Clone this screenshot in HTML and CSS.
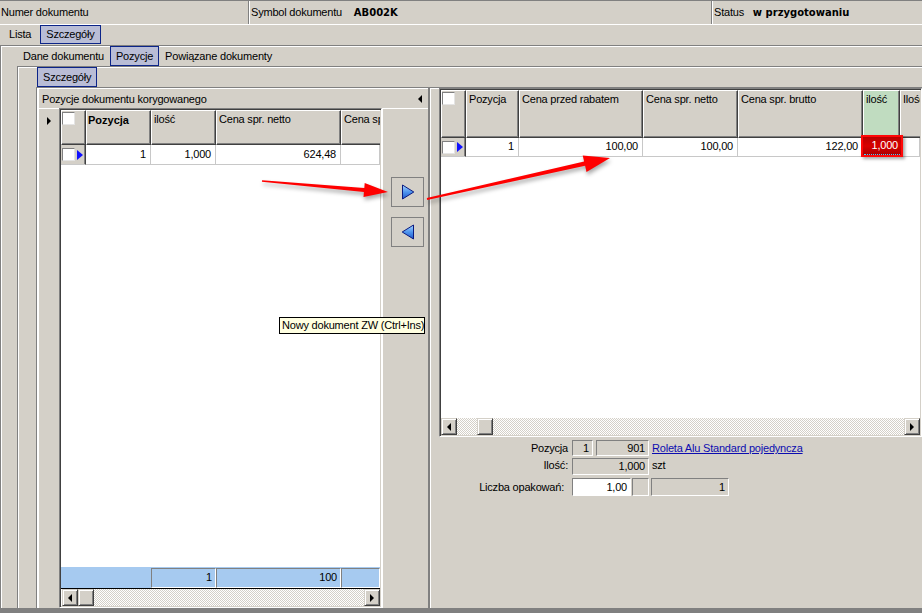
FILE: index.html
```
<!DOCTYPE html>
<html lang="pl">
<head>
<meta charset="utf-8">
<title>Pozycje dokumentu</title>
<link rel="stylesheet" href="styles.css">
</head>
<body>
<div class="app">
  <div class="infobar">
    <div class="info c1">Numer dokumentu</div>
    <div class="info c2">Symbol dokumentu <b>AB002K</b></div>
    <div class="info c3">Status <b>w przygotowaniu</b></div>
  </div>
  <div class="tabrow t1"><span class="tab">Lista</span><span class="tab on">Szczegóły</span></div>
  <div class="panel p1">
    <div class="tabrow t2"><span class="tab">Dane dokumentu</span><span class="tab on">Pozycje</span><span class="tab">Powiązane dokumenty</span></div>
    <div class="panel p2">
      <div class="tabrow t3"><span class="tab on">Szczegóły</span></div>
      <div class="panel p3">
        <section class="left">
          <div class="lhead"><span>Pozycje dokumentu korygowanego</span><i class="tri tl"></i></div>
          <div class="lbody">
            <div class="indcol"><i class="tri tr"></i></div>
            <div class="grid lgrid">
              <div class="gh">
                <div class="hc chk"><span class="cb"></span></div>
                <div class="hc bold">Pozycja</div>
                <div class="hc">ilość</div>
                <div class="hc">Cena spr. netto</div>
                <div class="hc last">Cena spr. brutto</div>
              </div>
              <div class="gr">
                <div class="dc ind"><span class="cb"></span><i class="ptr"></i></div>
                <div class="dc">1</div>
                <div class="dc">1,000</div>
                <div class="dc">624,48</div>
                <div class="dc"></div>
              </div>
              <div class="gbody"></div>
              <div class="gf">
                <div class="blank"></div>
                <div class="fc">1</div>
                <div class="fc">100</div>
                <div class="fc"></div>
              </div>
              <div class="sb lsb">
                <span class="sbtn"><i class="tri sl"></i></span>
                <span class="sbtn"></span>
                <span class="track"></span>
                <span class="sbtn"><i class="tri sr"></i></span>
              </div>
            </div>
            <div class="btncol">
              <button class="navbtn" type="button">
                <svg width="14" height="16" viewBox="0 0 14 16">
                  <defs>
                    <linearGradient id="gr1" x1="0" y1="0" x2="0" y2="1">
                      <stop offset="0" stop-color="#a9d6ff"/>
                      <stop offset="0.5" stop-color="#4f95ee"/>
                      <stop offset="1" stop-color="#1f58cc"/>
                    </linearGradient>
                  </defs>
                  <path d="M1.5 1 L12.8 8 L1.5 15 Z" fill="url(#gr1)" stroke="#0a1a80" stroke-width="1" stroke-linejoin="round"/>
                </svg>
              </button>
              <button class="navbtn" type="button">
                <svg width="14" height="16" viewBox="0 0 14 16">
                  <defs>
                    <linearGradient id="gr2" x1="0" y1="0" x2="0" y2="1">
                      <stop offset="0" stop-color="#a9d6ff"/>
                      <stop offset="0.5" stop-color="#4f95ee"/>
                      <stop offset="1" stop-color="#1f58cc"/>
                    </linearGradient>
                  </defs>
                  <path d="M12.5 1 L1.2 8 L12.5 15 Z" fill="url(#gr2)" stroke="#0a1a80" stroke-width="1" stroke-linejoin="round"/>
                </svg>
              </button>
            </div>
          </div>
        </section>
        <div class="splitter"></div>
        <section class="right">
          <div class="grid rgrid">
            <div class="gh">
              <div class="hc chk"><span class="cb"></span></div>
              <div class="hc">Pozycja</div>
              <div class="hc">Cena przed rabatem</div>
              <div class="hc">Cena spr. netto</div>
              <div class="hc">Cena spr. brutto</div>
              <div class="hc green">ilość</div>
              <div class="hc last">Ilość</div>
            </div>
            <div class="gr">
              <div class="dc ind"><span class="cb"></span><i class="ptr"></i></div>
              <div class="dc">1</div>
              <div class="dc">100,00</div>
              <div class="dc">100,00</div>
              <div class="dc">122,00</div>
              <div class="dc sel"><span class="editor">1,000</span></div>
              <div class="dc"></div>
            </div>
            <div class="gbody"></div>
            <div class="sb rsb">
              <span class="sbtn"><i class="tri sl"></i></span>
              <span class="track gap"></span>
              <span class="sbtn"></span>
              <span class="track"></span>
              <span class="sbtn"><i class="tri sr"></i></span>
            </div>
          </div>
          <div class="form">
            <div class="frow r1">
              <span class="flabel">Pozycja</span>
              <span class="fld w21">1</span>
              <span class="fld w53">901</span>
              <a class="flink" href="#">Roleta Alu Standard pojedyncza</a>
            </div>
            <div class="frow r2">
              <span class="flabel">Ilość:</span>
              <span class="fld w77">1,000</span>
              <span class="unit">szt</span>
            </div>
            <div class="frow r3">
              <span class="flabel pr">Liczba opakowań:</span>
              <span class="fld white w59">1,00</span>
              <span class="fld w17"></span>
              <span class="fld w78">1</span>
            </div>
          </div>
        </section>
      </div>
    </div>
  </div>
  <div class="bottom"></div>

  <div class="tip">Nowy dokument ZW (Ctrl+Ins)</div>

  <svg class="arrows" width="922" height="613" viewBox="0 0 922 613">
    <polygon points="261.9,181.8 363.9,191.9 363.5,196.9 388,192 364.7,182.9 364.3,187.9 262.1,180.2" fill="#ff0000"/>
    <polygon points="427.2,200.0 585.1,165.8 586.5,172.0 610,158 582.7,155.4 584.1,161.6 426.8,198.0" fill="#ff0000"/>
  </svg>
</div>
</body>
</html>
```

FILE: styles.css
```
* { box-sizing: border-box; margin: 0; padding: 0; }
html, body { margin: 0; background: #d4d0c8; }
body {
  font-family: "Liberation Sans", Arial, sans-serif;
  font-size: 11px;
  letter-spacing: -0.2px;
  color: #000;
}
.app {
  position: relative;
  width: 922px;
  height: 613px;
  display: flex;
  flex-direction: column;
  background: #d4d0c8;
  overflow: hidden;
}

/* top info bar */
.infobar {
  flex: none;
  display: flex;
  height: 25px;
  border-top: 1px solid #808080;
  border-bottom: 1px solid #fff;
}
.info { line-height: 23px; white-space: nowrap; padding-left: 1px; }
.c1 { width: 249px; border-right: 1px solid #808080; }
.c2 { width: 463px; border-left: 1px solid #fff; border-right: 1px solid #808080; }
.c3 { flex: 1; border-left: 1px solid #fff; padding-left: 1px; }
.info b {
  font-family: "DejaVu Sans", Verdana, sans-serif;
  font-size: 10px;
  font-weight: bold;
  letter-spacing: 0;
  margin-left: 9px;
}
.c3 b { margin-left: 6px; }

/* tabs */
.tabrow { flex: none; display: flex; align-items: flex-start; height: 20px; }
.tab {
  height: 20px;
  line-height: 18px;
  padding: 0 5px;
  border: 1px solid transparent;
  white-space: nowrap;
}
.tab.on { background: #b9bdd6; border-color: #0c2488; }
.t1 { padding-left: 3px; }
.t1 .tab { height: 19px; line-height: 17px; }
.t1 .tab + .tab { margin-left: 3px; }
.t2 { padding-left: 16px; }
.t3 { padding-left: 19px; }

/* nested panels */
.panel {
  flex: 1;
  min-height: 0;
  display: flex;
  flex-direction: column;
  border-top: 1px solid #808080;
  border-left: 1px solid #808080;
  box-shadow: inset 1px 1px 0 #fff;
}
.p2 { margin-left: 16px; }
.p3 { margin-left: 18px; flex-direction: row; padding-left: 1px; }

/* left section */
.left { flex: none; width: 390px; display: flex; flex-direction: column; }
.lhead {
  flex: none;
  height: 20px;
  display: flex;
  align-items: center;
  justify-content: space-between;
  padding: 0 6px 0 3px;
  border-top: 1px solid #fff;
  border-left: 1px solid #fff;
  white-space: nowrap;
}
.lbody { flex: 1; min-height: 0; display: flex; }
.indcol {
  flex: none;
  width: 21px;
  border-top: 1px solid #fff;
  border-left: 1px solid #fff;
  position: relative;
}
.indcol .tr { position: absolute; left: 8px; top: 8px; }

.tri { display: block; width: 0; height: 0; }
.tl { border-right: 4px solid #000; border-top: 4px solid transparent; border-bottom: 4px solid transparent; }
.tr { border-left: 4px solid #000; border-top: 4px solid transparent; border-bottom: 4px solid transparent; }
.sl { border-right: 4px solid #000; border-top: 4px solid transparent; border-bottom: 4px solid transparent; }
.sr { border-left: 4px solid #000; border-top: 4px solid transparent; border-bottom: 4px solid transparent; }

/* grids */
.grid {
  flex: none;
  display: flex;
  flex-direction: column;
  border: 1px solid;
  border-color: #808080 #fff #fff #808080;
  padding: 1px;
  box-shadow: inset 1px 1px 0 #404040, inset -1px -1px 0 #d4d0c8;
  background: #fff;
  overflow: hidden;
}
.lgrid { width: 323px; }
.rgrid { width: 483px; height: 349px; }

.gh, .gr, .gf { flex: none; display: grid; }
.lgrid .gh, .lgrid .gr, .lgrid .gf { grid-template-columns: 25px 65px 65px 125px 39px; }
.rgrid .gh, .rgrid .gr { grid-template-columns: 25px 53px 124px 95px 125px 37px 20px; }
.lgrid .gh { height: 35px; }
.rgrid .gh { height: 48px; }
.lgrid .gr { height: 20px; }
.rgrid .gr { height: 19px; }

.hc {
  background: #d4d0c8;
  border-top: 1px solid #fff;
  border-left: 1px solid #fff;
  border-right: 1px solid #404040;
  border-bottom: 1px solid #404040;
  box-shadow: inset -1px -1px 0 #808080;
  padding: 2px 2px 0 2px;
  line-height: 13px;
  white-space: nowrap;
  overflow: hidden;
}
.hc.bold { font-weight: bold; padding-left: 1px; padding-top: 3px; letter-spacing: 0; }
.hc.chk { padding: 1px 0 0 0; }
.hc.green { background: #c0dcc0; }
.hc.last { border-right: none; box-shadow: inset 0 -1px 0 #808080; }

.cb {
  display: block;
  width: 13px;
  height: 13px;
  background: #fff;
  border: 1px solid;
  border-color: #808080 #e4e4e4 #e4e4e4 #808080;
}
.ptr {
  display: block;
  width: 0;
  height: 0;
  border-left: 6px solid #1010ff;
  border-top: 5px solid transparent;
  border-bottom: 5px solid transparent;
}

.dc {
  background: #fff;
  border-right: 1px solid #c8c8c8;
  border-bottom: 1px solid #c8c8c8;
  text-align: right;
  padding-right: 4px;
  line-height: 18px;
  white-space: nowrap;
}
.rgrid .dc { line-height: 17px; }
.dc.ind {
  background: #d4d0c8;
  display: flex;
  align-items: center;
  gap: 2px;
  padding: 0 0 0 1px;
  border-right: 1px solid #404040;
  box-shadow: inset -1px 0 0 #808080;
}
.dc.sel { position: relative; }
.editor {
  position: absolute;
  left: -2px;
  top: -3px;
  width: 42px;
  height: 22px;
  background: linear-gradient(#b80000, #d80000 50%, #a80000);
  border: 2px solid #ff0808;
  color: #fff;
  text-align: right;
  padding-right: 3px;
  line-height: 17px;
  box-shadow: 2px 2px 3px rgba(0, 0, 0, 0.35);
}
.editor::after {
  content: "";
  position: absolute;
  left: 1px;
  right: 1px;
  bottom: 0;
  border-bottom: 1px dotted #3fd0ff;
}

.gbody { flex: 1; background: #fff; }

.gf { height: 21px; background: #a6caf0; padding-top: 1px; }
.gf .blank { grid-column: span 2; }
.fc {
  border: 1px solid;
  border-color: #808080 #fff #fff #808080;
  text-align: right;
  padding-right: 3px;
  line-height: 17px;
}

/* scrollbars */
.sb {
  flex: none;
  display: flex;
  height: 17px;
}
.lsb { height: 18px; border-top: 1px solid #000; padding-left: 1px; }
.sbtn {
  flex: none;
  width: 16px;
  height: 17px;
  background: #d4d0c8;
  border: 1px solid;
  border-color: #d4d0c8 #404040 #404040 #d4d0c8;
  box-shadow: inset 1px 1px 0 #fff, inset -1px -1px 0 #808080;
  display: flex;
  align-items: center;
  justify-content: center;
}
.track {
  flex: 1;
  background-color: #fff;
  background-image: conic-gradient(#d4d0c8 25%, #fff 0 50%, #d4d0c8 0 75%, #fff 0);
  background-size: 2px 2px;
}
.track.gap { flex: none; width: 20px; }

/* middle buttons */
.btncol {
  flex: none;
  width: 46px;
  border-top: 1px solid #fff;
  border-left: 1px solid #fff;
  padding: 68px 0 0 8px;
  display: flex;
  flex-direction: column;
  gap: 10px;
}
.navbtn {
  width: 33px;
  height: 30px;
  border: 1px solid #808080;
  background: #d4d0c8;
  display: flex;
  align-items: center;
  justify-content: center;
  padding: 0;
}
.navbtn svg { display: block; }

.splitter { flex: none; width: 2px; background: #808080; }

/* right section */
.right {
  flex: 1;
  min-width: 0;
  display: flex;
  flex-direction: column;
  border-left: 1px solid #fff;
  padding-left: 8px;
}

.form { flex: none; padding-top: 3px; display: flex; flex-direction: column; }
.frow { display: flex; align-items: center; white-space: nowrap; }
.r1 { height: 16px; }
.r2 { height: 17px; margin-top: 2px; align-items: flex-start; }
.r3 { height: 18px; margin-top: 3px; }
.flabel { flex: none; width: 129px; margin-right: 4px; text-align: right; line-height: 13px; }
.flabel.pr { padding-right: 4px; }
.r2 .flabel, .r2 .unit { padding-top: 1px; line-height: 13px; }
.fld {
  flex: none;
  height: 100%;
  background: #d4d0c8;
  border: 1px solid;
  border-color: #808080 #fff #fff #808080;
  text-align: right;
  padding-right: 3px;
  line-height: 14px;
}
.r2 .fld { line-height: 15px; }
.r3 .fld { line-height: 16px; }
.fld.white { background: #fff; }
.w21 { width: 21px; }
.w53 { width: 53px; margin-left: 3px; }
.w77 { width: 77px; }
.w59 { width: 59px; }
.w17 { width: 17px; margin-left: 1px; }
.w78 { width: 78px; margin-left: 2px; }
.flink { margin-left: 3px; color: #0c0cb0; text-decoration: underline; }
.unit { margin-left: 3px; }

.bottom { flex: none; height: 5px; background: #808080; }

/* overlays */
.tip {
  position: absolute;
  left: 279px;
  top: 317px;
  width: 146px;
  height: 17px;
  background: #ffffe1;
  border: 1px solid #000;
  padding-left: 2px;
  line-height: 15px;
  white-space: nowrap;
  overflow: hidden;
}
.arrows {
  position: absolute;
  left: 0;
  top: 0;
  pointer-events: none;
  filter: drop-shadow(1px 3px 2px rgba(0, 0, 0, 0.35));
}
```
